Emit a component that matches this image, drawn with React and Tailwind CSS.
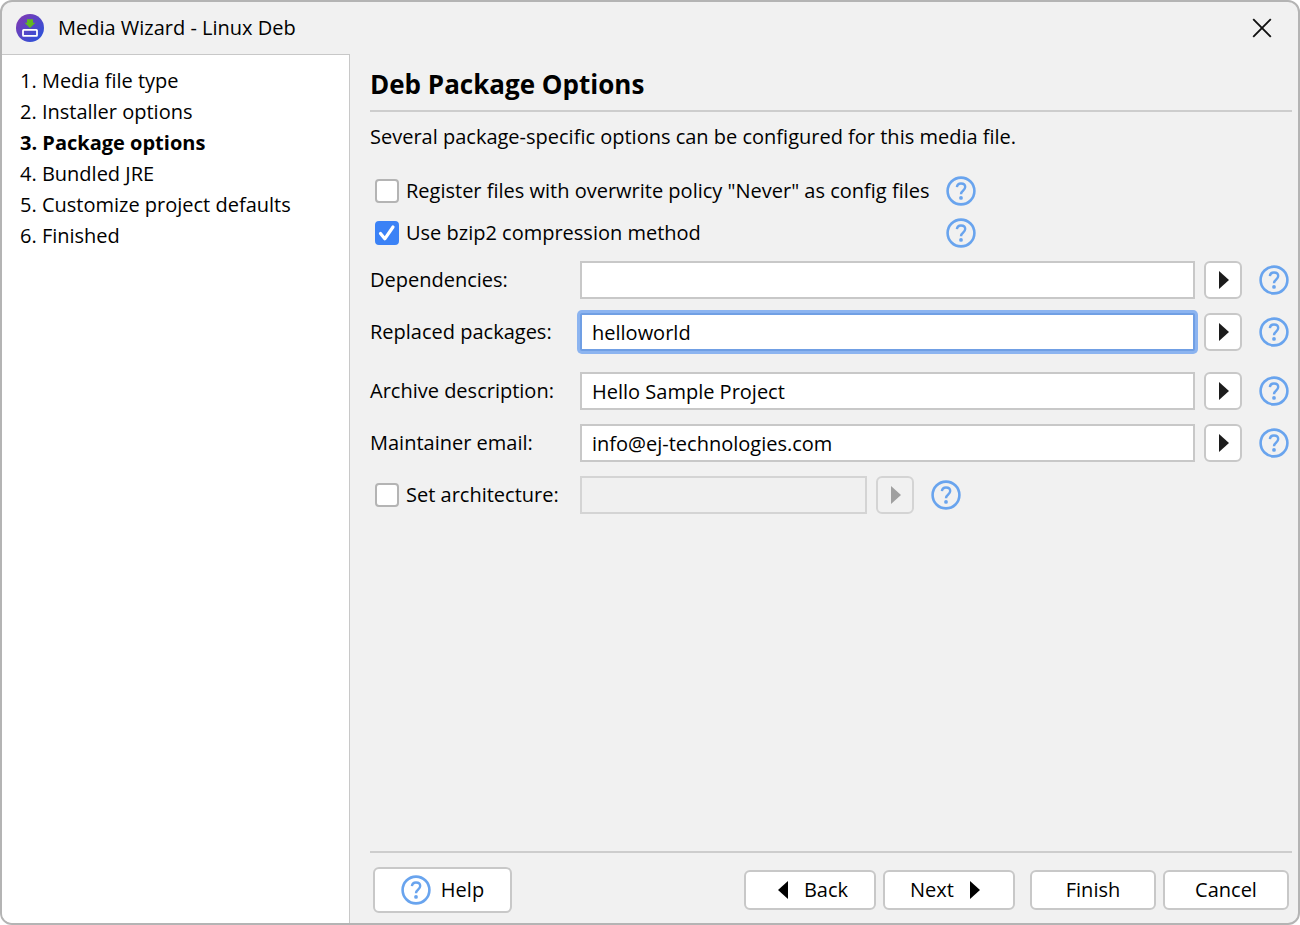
import { useState } from 'react';
import clsx from 'clsx';

const steps = [
  'Media file type',
  'Installer options',
  'Package options',
  'Bundled JRE',
  'Customize project defaults',
  'Finished',
];

const AppLogo = () => (
  <svg viewBox="0 0 28 28" className="w-7 h-7" aria-hidden="true">
    <defs>
      <linearGradient id="logo" x1="0.1" y1="0.1" x2="0.9" y2="0.9">
        <stop offset="0" stopColor="#7d3ab4" />
        <stop offset="1" stopColor="#2c52da" />
      </linearGradient>
    </defs>
    <circle cx="14" cy="14" r="14" fill="url(#logo)" />
    <rect x="7" y="15.8" width="14" height="6" rx="0.6" fill="none" stroke="#fff" strokeWidth="1.8" />
    <path d="M11 5.2h6v3.6h2.4L14 14 8.6 8.8H11z" fill="#61b822" />
  </svg>
);

const HelpIcon = () => (
  <svg viewBox="0 0 30 30" className="w-[30px] h-[30px] shrink-0" fill="none" stroke="#69a4ee" aria-hidden="true">
    <circle cx="15" cy="15" r="13.4" strokeWidth="2.6" />
    <path
      d="M10.9 11.2C11.1 8.9 12.7 7.5 15 7.5c2.5 0 4.2 1.5 4.2 3.6 0 1.7-.9 2.6-2.2 3.6-1.3 1-2 1.8-2 3.6"
      strokeWidth="2.4"
    />
    <circle cx="15" cy="21.9" r="1.9" fill="#69a4ee" stroke="none" />
  </svg>
);

const Arrow = ({ left }) => (
  <svg viewBox="0 0 10 18" className="w-[10px] h-[18px]" fill="currentColor" aria-hidden="true">
    <path d={left ? 'M10 0v18L0 9z' : 'M0 0v18l10-9z'} />
  </svg>
);

const HelpButton = ({ topic }) => (
  <button aria-label={`Help: ${topic}`} className="shrink-0">
    <HelpIcon />
  </button>
);

const ArrowButton = ({ label, disabled }) => (
  <button
    aria-label={label}
    disabled={disabled}
    className={clsx(
      'w-[38px] h-[38px] shrink-0 flex items-center justify-center rounded-md border-2 pl-[2px]',
      disabled ? 'border-[#d4d4d4] text-[#a0a0a0]' : 'border-[#c8c8c8] bg-white text-[#1c1c1c]'
    )}
  >
    <Arrow />
  </button>
);

const CheckBox = ({ label, checked, onChange }) => (
  <label className="flex items-center gap-[7px] pl-[5px] whitespace-nowrap">
    <span className="relative w-6 h-6 shrink-0">
      <input
        type="checkbox"
        checked={checked}
        onChange={(e) => onChange(e.target.checked)}
        className="block w-6 h-6 appearance-none rounded border-2 border-[#b4b4b4] bg-white checked:border-[#3b82f6] checked:bg-[#3b82f6]"
      />
      {checked && (
        <svg viewBox="0 0 24 24" className="absolute inset-0 w-6 h-6 pointer-events-none" fill="none" stroke="#fff" strokeWidth="3.2" strokeLinecap="round" strokeLinejoin="round">
          <path d="M5.5 12.5l4.3 5.3L18 6" />
        </svg>
      )}
    </span>
    {label}
  </label>
);

const FieldRow = ({ id, label, value, onChange, active }) => (
  <div className="flex items-center h-[38px]">
    <label htmlFor={id} className="w-[210px] shrink-0">
      {label}
    </label>
    <input
      id={id}
      type="text"
      value={value}
      onChange={(e) => onChange(e.target.value)}
      className={clsx(
        'flex-1 min-w-0 h-[38px] px-[10px] border-2 bg-white outline-none',
        active ? 'border-[#709fe4] ring-3 ring-[#8cb4f0] rounded-xs' : 'border-[#c8c8c8]'
      )}
    />
    <div className="flex items-center gap-[17px] pl-[9px] pr-[3px]">
      <ArrowButton label={`Insert variable for ${label}`} />
      <HelpButton topic={label} />
    </div>
  </div>
);

const NavButton = ({ children, className }) => (
  <button className={clsx('h-10 flex items-center justify-center rounded-md border-2 border-[#c8c8c8] bg-white', className)}>
    {children}
  </button>
);

const App = () => {
  const [config, setConfig] = useState(false);
  const [bzip, setBzip] = useState(true);
  const [arch, setArch] = useState(false);
  const [fields, setFields] = useState({
    dependencies: '',
    replaced: 'helloworld',
    description: 'Hello Sample Project',
    email: 'info@ej-technologies.com',
  });

  const update = (key) => (value) => setFields((prev) => ({ ...prev, [key]: value }));

  return (
    <div className="min-h-screen flex flex-col overflow-hidden rounded-xl border-2 border-[#b4b4b4] bg-[#f1f1f1] font-['Open_Sans','Noto_Sans',sans-serif] text-[20px] leading-[30px] text-black">
      <header className="h-[52px] flex items-center pl-[14px] pr-[22px]">
        <AppLogo />
        <span className="pl-[14px] flex-1">Media Wizard - Linux Deb</span>
        <button aria-label="Close" className="p-1">
          <svg viewBox="0 0 20 20" className="w-5 h-5" stroke="#111" strokeWidth="1.9">
            <path d="M1.2 1.2l17.6 17.6M18.8 1.2L1.2 18.8" />
          </svg>
        </button>
      </header>

      <div className="flex-1 flex">
        <nav className="w-[348px] shrink-0 border-t border-r border-[#c8c8c8] bg-white pl-[18px] pt-[10px]">
          <ol>
            {steps.map((step, idx) => (
              <li key={step} className={clsx('leading-[31px]', idx === 2 && 'font-bold')}>
                {idx + 1}. {step}
              </li>
            ))}
          </ol>
        </nav>

        <main className="flex-1 min-w-0 flex flex-col pl-5 pr-[6px]">
          <h1 className="pt-3 pb-2 text-[26px] leading-9 font-bold border-b-2 border-[#cdcdcd]">Deb Package Options</h1>
          <p className="mt-[10px]">Several package-specific options can be configured for this media file.</p>

          <div className="mt-[18px] w-[606px]">
            <div className="h-[42px] flex items-center justify-between">
              <CheckBox label={'Register files with overwrite policy "Never" as config files'} checked={config} onChange={setConfig} />
              <HelpButton topic="Config files" />
            </div>
            <div className="h-[42px] flex items-center justify-between">
              <CheckBox label="Use bzip2 compression method" checked={bzip} onChange={setBzip} />
              <HelpButton topic="Compression" />
            </div>
          </div>

          <div className="mt-[7px] flex flex-col gap-[14px]">
            <FieldRow id="dependencies" label="Dependencies:" value={fields.dependencies} onChange={update('dependencies')} />
            <FieldRow id="replaced" label="Replaced packages:" value={fields.replaced} onChange={update('replaced')} active />
          </div>
          <div className="mt-[21px] flex flex-col gap-[14px]">
            <FieldRow id="description" label="Archive description:" value={fields.description} onChange={update('description')} />
            <FieldRow id="email" label="Maintainer email:" value={fields.email} onChange={update('email')} />
            <div className="flex items-center h-[38px]">
              <div className="w-[210px] shrink-0">
                <CheckBox label="Set architecture:" checked={arch} onChange={setArch} />
              </div>
              <input
                type="text"
                aria-label="Architecture"
                disabled={!arch}
                className="w-[287px] h-[38px] px-[10px] border-2 border-[#c8c8c8] bg-white disabled:border-[#d4d4d4] disabled:bg-[#f0f0f0]"
              />
              <div className="flex items-center gap-[17px] pl-[9px]">
                <ArrowButton label="Choose architecture" disabled={!arch} />
                <HelpButton topic="Architecture" />
              </div>
            </div>
          </div>

          <footer className="mt-auto h-[72px] flex items-center justify-between border-t-2 border-[#cdcdcd] px-[3px] pt-[3px]">
            <button className="w-[139px] h-[46px] flex items-center justify-center gap-[10px] rounded-md border-2 border-[#c8c8c8] bg-white">
              <HelpIcon />
              Help
            </button>
            <div className="flex">
              <NavButton className="w-[132px] gap-4 pl-[6px]">
                <Arrow left />
                Back
              </NavButton>
              <NavButton className="w-[132px] ml-[7px] gap-4 pr-2">
                Next
                <Arrow />
              </NavButton>
              <NavButton className="w-[126px] ml-[15px]">Finish</NavButton>
              <NavButton className="w-[126px] ml-[7px]">Cancel</NavButton>
            </div>
          </footer>
        </main>
      </div>
    </div>
  );
};

export default App;
